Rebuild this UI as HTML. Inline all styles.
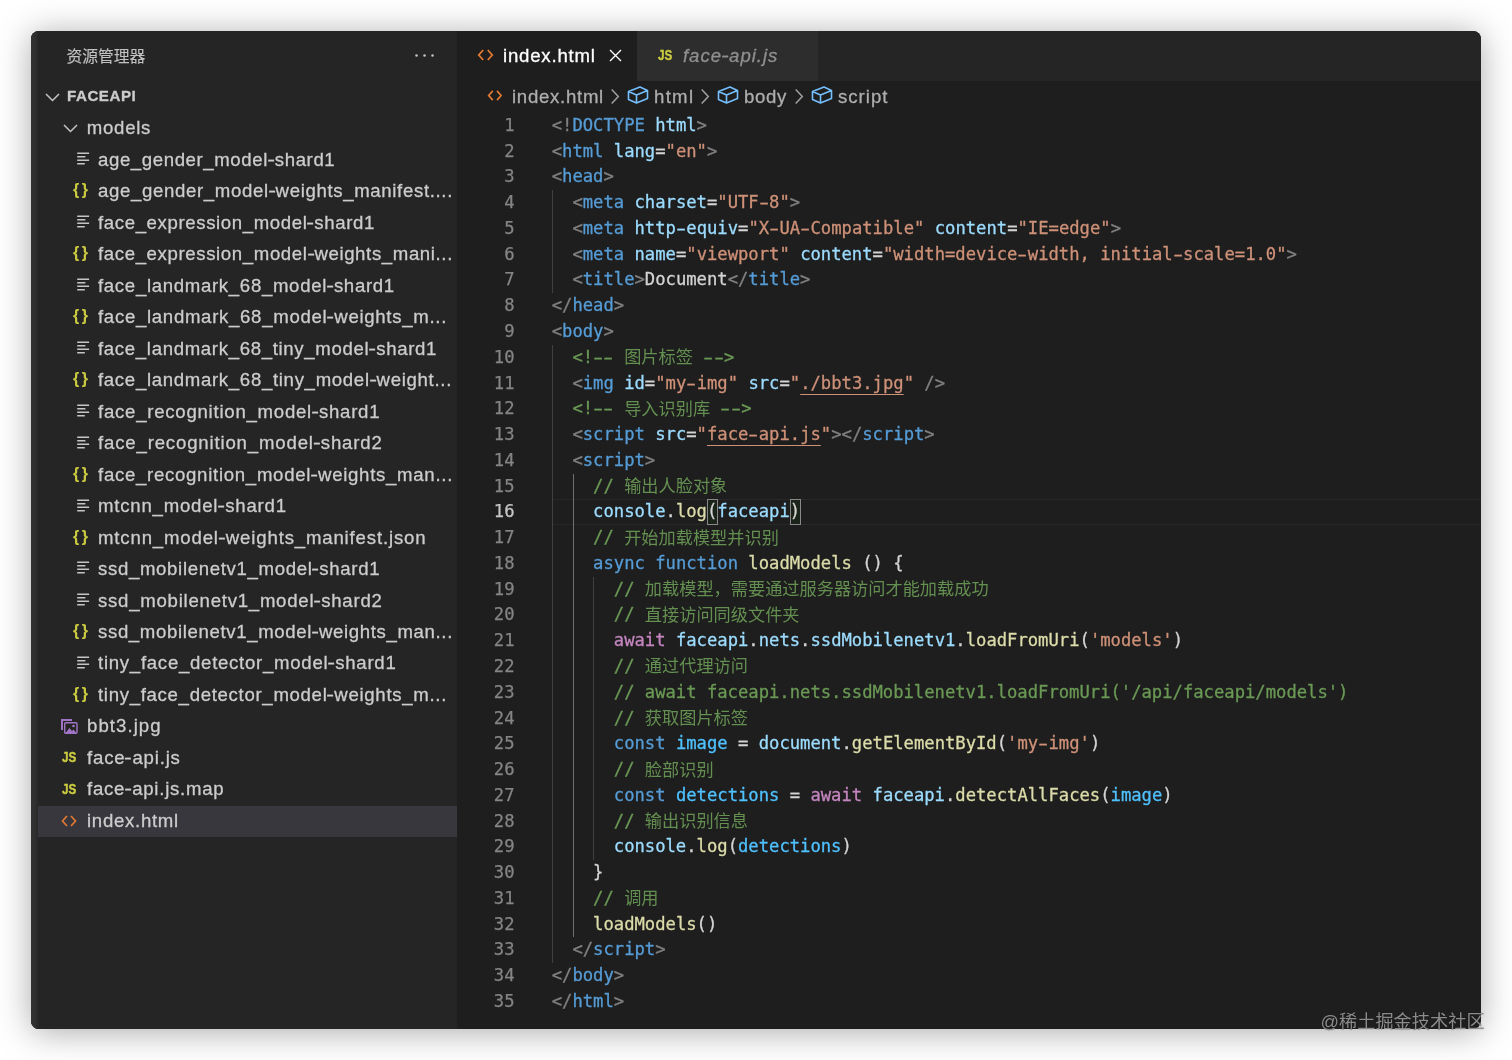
<!DOCTYPE html>
<html lang="zh">
<head>
<meta charset="UTF-8">
<title>VS Code</title>
<style>
html,body{margin:0;padding:0;background:#fff;}
body{width:1512px;height:1060px;position:relative;overflow:hidden;font-family:"Liberation Sans","Noto Sans CJK SC",sans-serif;}
#win{position:absolute;left:31px;top:31px;width:1450px;height:997.5px;border-radius:8px;background:#1e1e1e;box-shadow:0 3px 34px rgba(0,0,0,.34);overflow:hidden;}
#abs{position:absolute;left:0;top:0;width:1512px;height:1060px;will-change:transform;}
#side{position:absolute;left:31px;top:31px;width:426px;height:997.5px;background:#252526;border-radius:8px 0 0 8px;}
#edge{position:absolute;left:31px;top:31px;width:8px;height:997.5px;background:linear-gradient(90deg,#323232 0,#303030 50%,#252526 100%);border-radius:8px 0 0 8px;}
#tabs{position:absolute;left:457px;top:31px;width:1024px;height:50px;background:#252526;border-radius:0 8px 0 0;}
#tab1{position:absolute;left:457px;top:31px;width:180px;height:50px;background:#1e1e1e;}
#tab2{position:absolute;left:637px;top:31px;width:181px;height:50px;background:#2d2d2d;}
.abs{position:absolute;white-space:pre;-webkit-text-stroke:.3px;}
.row{position:absolute;left:38px;width:419px;height:31.5px;}
.row.sel{background:none;}
#selbg{position:absolute;left:38px;top:805.7px;width:419px;height:31.1px;background:#37373d;}
.row .nm{-webkit-text-stroke:.3px;position:absolute;top:0;line-height:31.5px;font-size:18.6px;color:#cccccc;white-space:pre;margin-left:-38px;}
.row .ic{position:absolute;top:8px;margin-left:-38px;}
.jic{-webkit-text-stroke:.1px;position:absolute;top:0;line-height:30px;font-size:16px;font-weight:bold;color:#cbcb41;margin-left:-38px;letter-spacing:2.6px;font-family:"Liberation Sans",sans-serif;}
.jsic{position:absolute;top:.3px;line-height:31.5px;font-size:14.6px;font-weight:bold;color:#cbcb41;margin-left:-38px;font-family:"Liberation Sans",sans-serif;transform:scaleX(.8);-webkit-text-stroke:.4px;transform-origin:0 50%;}
.ln{-webkit-text-stroke:.25px;position:absolute;left:457px;width:57.5px;text-align:right;height:25.77px;line-height:25.77px;font-family:"DejaVu Sans Mono","Liberation Mono",monospace;font-size:17.2px;color:#858585;}
.ln.act{color:#c6c6c6;}
.cl{-webkit-text-stroke:.3px;position:absolute;left:551.7px;height:25.77px;line-height:25.77px;font-family:"DejaVu Sans Mono","Liberation Mono","Noto Sans CJK SC",monospace;font-size:17.2px;white-space:pre;color:#d4d4d4;}
.cl .zh{font-family:"Noto Sans CJK SC",sans-serif;font-size:17.2px;line-height:0;position:relative;top:.5px;-webkit-text-stroke:0;opacity:.92;}
.cl .u,.cl .u .hy{text-decoration:underline;text-underline-offset:5.2px;text-decoration-thickness:1.2px;}
.cl .hy{display:inline-block;transform:scaleX(1.62);}
.nm .hy,.tb .hy{display:inline-block;transform:scaleX(1.25);}
.bmx{position:absolute;box-sizing:border-box;border:1px solid #888;background:rgba(0,100,0,.1);}
.guide{position:absolute;width:1px;background:#404040;}
.guide.a{background:#707070;}
#curline{position:absolute;left:552px;top:498.85px;width:929px;height:24.27px;border-top:1.5px solid #282828;border-bottom:1.5px solid #282828;}
#bc{position:absolute;left:457px;top:81px;height:31.5px;line-height:31.5px;font-size:18.6px;color:#aeaeae;white-space:pre;}
#bc span,#bc svg{position:absolute;}
#wm{position:absolute;left:1320.4px;top:1009px;font-size:18.2px;line-height:26px;color:rgba(150,150,150,.92);text-shadow:0 0 1px rgba(0,0,0,.55);letter-spacing:.05px;font-family:"Liberation Sans","Noto Sans CJK SC",sans-serif;white-space:pre;}
</style>
</head>
<body>
<div id="win"></div>
<div id="abs">
<div id="side"></div>
<div id="edge"></div>
<div id="tabs"></div>
<div id="tab1"></div>
<div id="tab2"></div>

<div id="selbg"></div>
<!-- sidebar header -->
<span class="abs" style="left:66.5px;top:32.3px;line-height:50px;font-size:15.75px;color:#c2c2c2;-webkit-text-stroke:.1px;">资源管理器</span>
<svg class="abs" style="left:412px;top:50px" width="26" height="12" viewBox="0 0 26 12"><circle cx="4.5" cy="5.6" r="1.25" fill="#c5c5c5"/><circle cx="12.5" cy="5.6" r="1.25" fill="#c5c5c5"/><circle cx="20.5" cy="5.6" r="1.25" fill="#c5c5c5"/></svg>
<svg class="abs" style="left:44px;top:89px" width="17" height="16" viewBox="0 0 17 16"><path d="M2 5l6.5 6.5L15 5" stroke="#c5c5c5" stroke-width="1.5" fill="none"/></svg>
<span class="abs" style="left:67px;top:81.4px;line-height:30px;font-size:15.1px;font-weight:bold;color:#cccccc;letter-spacing:.55px;">FACEAPI</span>
<div class="row" style="top:111.73px"><svg class="ic" style="left:62px;top:8px" width="17" height="16" viewBox="0 0 17 16"><path d="M2 5l6.5 6.5L15 5" stroke="#c5c5c5" stroke-width="1.5" fill="none"/></svg><span class="nm" style="left:86.8px;letter-spacing:0.728px">models</span></div>
<div class="row" style="top:144.00px"><svg class="ic" style="left:76px;top:7.4px" width="14" height="16" viewBox="0 0 14 16"><path d="M1.2 2.3h11.9M1.2 5.8h8.2M1.2 9.25h11.9M1.2 12.7h7.6" stroke="#c5c5c5" stroke-width="1.6" fill="none"/></svg><span class="nm" style="left:98px;letter-spacing:0.607px">age_gender_model<span class="hy">-</span>shard1</span></div>
<div class="row" style="top:175.47px"><span class="jic" style="left:73px">{}</span><span class="nm" style="left:98px;letter-spacing:0.654px">age_gender_model<span class="hy">-</span>weights_manifest....</span></div>
<div class="row" style="top:206.93px"><svg class="ic" style="left:76px;top:7.4px" width="14" height="16" viewBox="0 0 14 16"><path d="M1.2 2.3h11.9M1.2 5.8h8.2M1.2 9.25h11.9M1.2 12.7h7.6" stroke="#c5c5c5" stroke-width="1.6" fill="none"/></svg><span class="nm" style="left:98px;letter-spacing:0.622px">face_expression_model<span class="hy">-</span>shard1</span></div>
<div class="row" style="top:238.39px"><span class="jic" style="left:73px">{}</span><span class="nm" style="left:98px;letter-spacing:0.626px">face_expression_model<span class="hy">-</span>weights_mani...</span></div>
<div class="row" style="top:269.86px"><svg class="ic" style="left:76px;top:7.4px" width="14" height="16" viewBox="0 0 14 16"><path d="M1.2 2.3h11.9M1.2 5.8h8.2M1.2 9.25h11.9M1.2 12.7h7.6" stroke="#c5c5c5" stroke-width="1.6" fill="none"/></svg><span class="nm" style="left:98px;letter-spacing:0.683px">face_landmark_68_model<span class="hy">-</span>shard1</span></div>
<div class="row" style="top:301.32px"><span class="jic" style="left:73px">{}</span><span class="nm" style="left:98px;letter-spacing:0.699px">face_landmark_68_model<span class="hy">-</span>weights_m...</span></div>
<div class="row" style="top:332.79px"><svg class="ic" style="left:76px;top:7.4px" width="14" height="16" viewBox="0 0 14 16"><path d="M1.2 2.3h11.9M1.2 5.8h8.2M1.2 9.25h11.9M1.2 12.7h7.6" stroke="#c5c5c5" stroke-width="1.6" fill="none"/></svg><span class="nm" style="left:98px;letter-spacing:0.670px">face_landmark_68_tiny_model<span class="hy">-</span>shard1</span></div>
<div class="row" style="top:364.25px"><span class="jic" style="left:73px">{}</span><span class="nm" style="left:98px;letter-spacing:0.684px">face_landmark_68_tiny_model<span class="hy">-</span>weight...</span></div>
<div class="row" style="top:395.72px"><svg class="ic" style="left:76px;top:7.4px" width="14" height="16" viewBox="0 0 14 16"><path d="M1.2 2.3h11.9M1.2 5.8h8.2M1.2 9.25h11.9M1.2 12.7h7.6" stroke="#c5c5c5" stroke-width="1.6" fill="none"/></svg><span class="nm" style="left:98px;letter-spacing:0.752px">face_recognition_model<span class="hy">-</span>shard1</span></div>
<div class="row" style="top:427.18px"><svg class="ic" style="left:76px;top:7.4px" width="14" height="16" viewBox="0 0 14 16"><path d="M1.2 2.3h11.9M1.2 5.8h8.2M1.2 9.25h11.9M1.2 12.7h7.6" stroke="#c5c5c5" stroke-width="1.6" fill="none"/></svg><span class="nm" style="left:98px;letter-spacing:0.834px">face_recognition_model<span class="hy">-</span>shard2</span></div>
<div class="row" style="top:458.65px"><span class="jic" style="left:73px">{}</span><span class="nm" style="left:98px;letter-spacing:0.712px">face_recognition_model<span class="hy">-</span>weights_man...</span></div>
<div class="row" style="top:490.12px"><svg class="ic" style="left:76px;top:7.4px" width="14" height="16" viewBox="0 0 14 16"><path d="M1.2 2.3h11.9M1.2 5.8h8.2M1.2 9.25h11.9M1.2 12.7h7.6" stroke="#c5c5c5" stroke-width="1.6" fill="none"/></svg><span class="nm" style="left:98px;letter-spacing:0.782px">mtcnn_model<span class="hy">-</span>shard1</span></div>
<div class="row" style="top:521.58px"><span class="jic" style="left:73px">{}</span><span class="nm" style="left:98px;letter-spacing:0.837px">mtcnn_model<span class="hy">-</span>weights_manifest.json</span></div>
<div class="row" style="top:553.04px"><svg class="ic" style="left:76px;top:7.4px" width="14" height="16" viewBox="0 0 14 16"><path d="M1.2 2.3h11.9M1.2 5.8h8.2M1.2 9.25h11.9M1.2 12.7h7.6" stroke="#c5c5c5" stroke-width="1.6" fill="none"/></svg><span class="nm" style="left:98px;letter-spacing:0.665px">ssd_mobilenetv1_model<span class="hy">-</span>shard1</span></div>
<div class="row" style="top:584.51px"><svg class="ic" style="left:76px;top:7.4px" width="14" height="16" viewBox="0 0 14 16"><path d="M1.2 2.3h11.9M1.2 5.8h8.2M1.2 9.25h11.9M1.2 12.7h7.6" stroke="#c5c5c5" stroke-width="1.6" fill="none"/></svg><span class="nm" style="left:98px;letter-spacing:0.750px">ssd_mobilenetv1_model<span class="hy">-</span>shard2</span></div>
<div class="row" style="top:615.98px"><span class="jic" style="left:73px">{}</span><span class="nm" style="left:98px;letter-spacing:0.644px">ssd_mobilenetv1_model<span class="hy">-</span>weights_man...</span></div>
<div class="row" style="top:647.44px"><svg class="ic" style="left:76px;top:7.4px" width="14" height="16" viewBox="0 0 14 16"><path d="M1.2 2.3h11.9M1.2 5.8h8.2M1.2 9.25h11.9M1.2 12.7h7.6" stroke="#c5c5c5" stroke-width="1.6" fill="none"/></svg><span class="nm" style="left:98px;letter-spacing:0.725px">tiny_face_detector_model<span class="hy">-</span>shard1</span></div>
<div class="row" style="top:678.90px"><span class="jic" style="left:73px">{}</span><span class="nm" style="left:98px;letter-spacing:0.689px">tiny_face_detector_model<span class="hy">-</span>weights_m...</span></div>
<div class="row" style="top:710.37px"><svg class="ic" style="left:59.6px;top:8px" width="18" height="17" viewBox="0 0 18 17"><path d="M1 1h11v2H3v9H1z" fill="#a074c4"/><rect x="4.7" y="4.7" width="12.3" height="10.6" rx="1" fill="none" stroke="#a074c4" stroke-width="1.4"/><path d="M5.5 15l4-5 2.5 3 1.5-1.5 3 3.5z" fill="#a074c4"/><circle cx="13.5" cy="8" r="1.3" fill="#a074c4"/></svg><span class="nm" style="left:87px;letter-spacing:1.059px">bbt3.jpg</span></div>
<div class="row" style="top:741.83px"><span class="jsic" style="left:61.9px">JS</span><span class="nm" style="left:87px;letter-spacing:0.813px">face<span class="hy">-</span>api.js</span></div>
<div class="row" style="top:773.30px"><span class="jsic" style="left:61.9px">JS</span><span class="nm" style="left:87px;letter-spacing:0.756px">face<span class="hy">-</span>api.js.map</span></div>
<div class="row sel" style="top:804.76px"><svg class="ic" style="left:61px;top:9.1px" width="16" height="14" viewBox="0 0 16 14"><path d="M6 2L1.5 7 6 12M10 2l4.5 5L10 12" stroke="#e37933" stroke-width="1.7" fill="none"/></svg><span class="nm" style="left:87px;letter-spacing:0.715px">index.html</span></div>

<!-- tabs -->
<svg class="abs" style="left:477px;top:48px" width="17" height="14" viewBox="0 0 17 14"><path d="M6.2 2L1.8 7l4.4 5M10.8 2l4.4 5-4.4 5" stroke="#e37933" stroke-width="1.8" fill="none"/></svg>
<span class="abs" style="left:503px;top:31px;line-height:49px;font-size:18.6px;color:#ffffff;letter-spacing:.8px;">index.html</span>
<svg class="abs" style="left:608px;top:48px" width="15" height="15" viewBox="0 0 15 15"><path d="M2 2l11 11M13 2L2 13" stroke="#ffffff" stroke-width="1.4" fill="none"/></svg>
<span class="abs" style="left:658px;top:31px;line-height:49px;font-size:14.6px;font-weight:bold;color:#cbcb41;transform:scaleX(.8);transform-origin:0 50%;-webkit-text-stroke:.4px;">JS</span>
<span class="abs" style="left:683px;top:31px;line-height:49px;font-size:18.6px;font-style:italic;color:#8f8f8f;letter-spacing:.95px;"><span class="tb">face<span class="hy">-</span>api.js</span></span>

<!-- breadcrumb -->
<svg class="abs" style="left:486.6px;top:89.3px" width="15.8" height="13" viewBox="0 0 17 14"><path d="M6.2 2L1.8 7l4.4 5M10.8 2l4.4 5-4.4 5" stroke="#e37933" stroke-width="1.8" fill="none"/></svg>
<span class="abs" style="line-height:31.5px;font-size:18.6px;color:#aeaeae;letter-spacing:.72px;left:512px;top:81px;">index.html</span>
<span class="abs" style="left:610px;top:88px;"><svg width="10" height="17" viewBox="0 0 10 17"><path d="M1.7 1.5l6.6 7-6.6 7" fill="none" stroke="#a0a0a0" stroke-width="1.5"/></svg></span>
<span class="abs" style="left:627px;top:85.3px;"><svg width="22" height="20" viewBox="0 0 22 20"><path d="M1.5 6.5L13 2l7.5 3.5v8L9.5 18l-8-3.5zM1.5 6.5l8 3.5L20.5 5.5M9.5 10v8" fill="none" stroke="#75beff" stroke-width="1.6" stroke-linejoin="round"/></svg></span>
<span class="abs" style="line-height:31.5px;font-size:18.6px;color:#aeaeae;letter-spacing:1.3px;left:654px;top:81px;">html</span>
<span class="abs" style="left:700px;top:88px;"><svg width="10" height="17" viewBox="0 0 10 17"><path d="M1.7 1.5l6.6 7-6.6 7" fill="none" stroke="#a0a0a0" stroke-width="1.5"/></svg></span>
<span class="abs" style="left:717px;top:85.3px;"><svg width="22" height="20" viewBox="0 0 22 20"><path d="M1.5 6.5L13 2l7.5 3.5v8L9.5 18l-8-3.5zM1.5 6.5l8 3.5L20.5 5.5M9.5 10v8" fill="none" stroke="#75beff" stroke-width="1.6" stroke-linejoin="round"/></svg></span>
<span class="abs" style="line-height:31.5px;font-size:18.6px;color:#aeaeae;letter-spacing:.7px;left:744px;top:81px;">body</span>
<span class="abs" style="left:794px;top:88px;"><svg width="10" height="17" viewBox="0 0 10 17"><path d="M1.7 1.5l6.6 7-6.6 7" fill="none" stroke="#a0a0a0" stroke-width="1.5"/></svg></span>
<span class="abs" style="left:811px;top:85.3px;"><svg width="22" height="20" viewBox="0 0 22 20"><path d="M1.5 6.5L13 2l7.5 3.5v8L9.5 18l-8-3.5zM1.5 6.5l8 3.5L20.5 5.5M9.5 10v8" fill="none" stroke="#75beff" stroke-width="1.6" stroke-linejoin="round"/></svg></span>
<span class="abs" style="line-height:31.5px;font-size:18.6px;color:#aeaeae;letter-spacing:1px;left:838px;top:81px;">script</span>

<!-- editor -->
<div id="curline"></div>
<div class="bmx" style="left:706.73px;top:499.35px;width:10.96px;height:25.77px"></div>
<div class="bmx" style="left:789.57px;top:499.35px;width:10.96px;height:25.77px"></div>
<div class="guide" style="left:552px;top:190.11px;height:103.08px"></div>
<div class="guide" style="left:552px;top:344.73px;height:618.48px"></div>
<div class="guide a" style="left:572.5px;top:473.58px;height:463.86px"></div>
<div class="guide" style="left:593.3px;top:576.66px;height:283.47px"></div>
<div class="ln" style="top:112.80px">1</div><div class="cl" style="top:112.80px"><span style="color:#808080">&lt;!</span><span style="color:#569cd6">DOCTYPE</span> <span style="color:#9cdcfe">html</span><span style="color:#808080">&gt;</span></div>
<div class="ln" style="top:138.57px">2</div><div class="cl" style="top:138.57px"><span style="color:#808080">&lt;</span><span style="color:#569cd6">html</span> <span style="color:#9cdcfe">lang</span><span style="color:#d4d4d4">=</span><span style="color:#ce9178">"en"</span><span style="color:#808080">&gt;</span></div>
<div class="ln" style="top:164.34px">3</div><div class="cl" style="top:164.34px"><span style="color:#808080">&lt;</span><span style="color:#569cd6">head</span><span style="color:#808080">&gt;</span></div>
<div class="ln" style="top:190.11px">4</div><div class="cl" style="top:190.11px">  <span style="color:#808080">&lt;</span><span style="color:#569cd6">meta</span> <span style="color:#9cdcfe">charset</span><span style="color:#d4d4d4">=</span><span style="color:#ce9178">"UTF<span class="hy">-</span>8"</span><span style="color:#808080">&gt;</span></div>
<div class="ln" style="top:215.88px">5</div><div class="cl" style="top:215.88px">  <span style="color:#808080">&lt;</span><span style="color:#569cd6">meta</span> <span style="color:#9cdcfe">http<span class="hy">-</span>equiv</span><span style="color:#d4d4d4">=</span><span style="color:#ce9178">"X<span class="hy">-</span>UA<span class="hy">-</span>Compatible"</span> <span style="color:#9cdcfe">content</span><span style="color:#d4d4d4">=</span><span style="color:#ce9178">"IE=edge"</span><span style="color:#808080">&gt;</span></div>
<div class="ln" style="top:241.65px">6</div><div class="cl" style="top:241.65px">  <span style="color:#808080">&lt;</span><span style="color:#569cd6">meta</span> <span style="color:#9cdcfe">name</span><span style="color:#d4d4d4">=</span><span style="color:#ce9178">"viewport"</span> <span style="color:#9cdcfe">content</span><span style="color:#d4d4d4">=</span><span style="color:#ce9178">"width=device<span class="hy">-</span>width, initial<span class="hy">-</span>scale=1.0"</span><span style="color:#808080">&gt;</span></div>
<div class="ln" style="top:267.42px">7</div><div class="cl" style="top:267.42px">  <span style="color:#808080">&lt;</span><span style="color:#569cd6">title</span><span style="color:#808080">&gt;</span><span style="color:#d4d4d4">Document</span><span style="color:#808080">&lt;/</span><span style="color:#569cd6">title</span><span style="color:#808080">&gt;</span></div>
<div class="ln" style="top:293.19px">8</div><div class="cl" style="top:293.19px"><span style="color:#808080">&lt;/</span><span style="color:#569cd6">head</span><span style="color:#808080">&gt;</span></div>
<div class="ln" style="top:318.96px">9</div><div class="cl" style="top:318.96px"><span style="color:#808080">&lt;</span><span style="color:#569cd6">body</span><span style="color:#808080">&gt;</span></div>
<div class="ln" style="top:344.73px">10</div><div class="cl" style="top:344.73px">  <span style="color:#6a9955">&lt;!<span class="hy">-</span><span class="hy">-</span> <span class="zh">图片标签</span> <span class="hy">-</span><span class="hy">-</span>&gt;</span></div>
<div class="ln" style="top:370.50px">11</div><div class="cl" style="top:370.50px">  <span style="color:#808080">&lt;</span><span style="color:#569cd6">img</span> <span style="color:#9cdcfe">id</span><span style="color:#d4d4d4">=</span><span style="color:#ce9178">"my<span class="hy">-</span>img"</span> <span style="color:#9cdcfe">src</span><span style="color:#d4d4d4">=</span><span style="color:#ce9178">"</span><span class="u" style="color:#ce9178">./bbt3.jpg</span><span style="color:#ce9178">"</span> <span style="color:#808080">/&gt;</span></div>
<div class="ln" style="top:396.27px">12</div><div class="cl" style="top:396.27px">  <span style="color:#6a9955">&lt;!<span class="hy">-</span><span class="hy">-</span> <span class="zh">导入识别库</span> <span class="hy">-</span><span class="hy">-</span>&gt;</span></div>
<div class="ln" style="top:422.04px">13</div><div class="cl" style="top:422.04px">  <span style="color:#808080">&lt;</span><span style="color:#569cd6">script</span> <span style="color:#9cdcfe">src</span><span style="color:#d4d4d4">=</span><span style="color:#ce9178">"</span><span class="u" style="color:#ce9178">face<span class="hy">-</span>api.js</span><span style="color:#ce9178">"</span><span style="color:#808080">&gt;&lt;/</span><span style="color:#569cd6">script</span><span style="color:#808080">&gt;</span></div>
<div class="ln" style="top:447.81px">14</div><div class="cl" style="top:447.81px">  <span style="color:#808080">&lt;</span><span style="color:#569cd6">script</span><span style="color:#808080">&gt;</span></div>
<div class="ln" style="top:473.58px">15</div><div class="cl" style="top:473.58px">    <span style="color:#6a9955">// <span class="zh">输出人脸对象</span></span></div>
<div class="ln act" style="top:499.35px">16</div><div class="cl" style="top:499.35px">    <span style="color:#9cdcfe">console</span><span style="color:#d4d4d4">.</span><span style="color:#dcdcaa">log</span><span style="color:#d4d4d4">(</span><span style="color:#9cdcfe">faceapi</span><span style="color:#d4d4d4">)</span></div>
<div class="ln" style="top:525.12px">17</div><div class="cl" style="top:525.12px">    <span style="color:#6a9955">// <span class="zh">开始加载模型并识别</span></span></div>
<div class="ln" style="top:550.89px">18</div><div class="cl" style="top:550.89px">    <span style="color:#569cd6">async</span> <span style="color:#569cd6">function</span> <span style="color:#dcdcaa">loadModels</span><span style="color:#d4d4d4"> () {</span></div>
<div class="ln" style="top:576.66px">19</div><div class="cl" style="top:576.66px">      <span style="color:#6a9955">// <span class="zh">加载模型，需要通过服务器访问才能加载成功</span></span></div>
<div class="ln" style="top:602.43px">20</div><div class="cl" style="top:602.43px">      <span style="color:#6a9955">// <span class="zh">直接访问同级文件夹</span></span></div>
<div class="ln" style="top:628.20px">21</div><div class="cl" style="top:628.20px">      <span style="color:#c586c0">await</span> <span style="color:#9cdcfe">faceapi</span><span style="color:#d4d4d4">.</span><span style="color:#9cdcfe">nets</span><span style="color:#d4d4d4">.</span><span style="color:#9cdcfe">ssdMobilenetv1</span><span style="color:#d4d4d4">.</span><span style="color:#dcdcaa">loadFromUri</span><span style="color:#d4d4d4">(</span><span style="color:#ce9178">'models'</span><span style="color:#d4d4d4">)</span></div>
<div class="ln" style="top:653.97px">22</div><div class="cl" style="top:653.97px">      <span style="color:#6a9955">// <span class="zh">通过代理访问</span></span></div>
<div class="ln" style="top:679.74px">23</div><div class="cl" style="top:679.74px">      <span style="color:#6a9955">// await faceapi.nets.ssdMobilenetv1.loadFromUri('/api/faceapi/models')</span></div>
<div class="ln" style="top:705.51px">24</div><div class="cl" style="top:705.51px">      <span style="color:#6a9955">// <span class="zh">获取图片标签</span></span></div>
<div class="ln" style="top:731.28px">25</div><div class="cl" style="top:731.28px">      <span style="color:#569cd6">const</span> <span style="color:#4fc1ff">image</span><span style="color:#d4d4d4"> = </span><span style="color:#9cdcfe">document</span><span style="color:#d4d4d4">.</span><span style="color:#dcdcaa">getElementById</span><span style="color:#d4d4d4">(</span><span style="color:#ce9178">'my<span class="hy">-</span>img'</span><span style="color:#d4d4d4">)</span></div>
<div class="ln" style="top:757.05px">26</div><div class="cl" style="top:757.05px">      <span style="color:#6a9955">// <span class="zh">脸部识别</span></span></div>
<div class="ln" style="top:782.82px">27</div><div class="cl" style="top:782.82px">      <span style="color:#569cd6">const</span> <span style="color:#4fc1ff">detections</span><span style="color:#d4d4d4"> = </span><span style="color:#c586c0">await</span> <span style="color:#9cdcfe">faceapi</span><span style="color:#d4d4d4">.</span><span style="color:#dcdcaa">detectAllFaces</span><span style="color:#d4d4d4">(</span><span style="color:#4fc1ff">image</span><span style="color:#d4d4d4">)</span></div>
<div class="ln" style="top:808.59px">28</div><div class="cl" style="top:808.59px">      <span style="color:#6a9955">// <span class="zh">输出识别信息</span></span></div>
<div class="ln" style="top:834.36px">29</div><div class="cl" style="top:834.36px">      <span style="color:#9cdcfe">console</span><span style="color:#d4d4d4">.</span><span style="color:#dcdcaa">log</span><span style="color:#d4d4d4">(</span><span style="color:#4fc1ff">detections</span><span style="color:#d4d4d4">)</span></div>
<div class="ln" style="top:860.13px">30</div><div class="cl" style="top:860.13px">    <span style="color:#d4d4d4">}</span></div>
<div class="ln" style="top:885.90px">31</div><div class="cl" style="top:885.90px">    <span style="color:#6a9955">// <span class="zh">调用</span></span></div>
<div class="ln" style="top:911.67px">32</div><div class="cl" style="top:911.67px">    <span style="color:#dcdcaa">loadModels</span><span style="color:#d4d4d4">()</span></div>
<div class="ln" style="top:937.44px">33</div><div class="cl" style="top:937.44px">  <span style="color:#808080">&lt;/</span><span style="color:#569cd6">script</span><span style="color:#808080">&gt;</span></div>
<div class="ln" style="top:963.21px">34</div><div class="cl" style="top:963.21px"><span style="color:#808080">&lt;/</span><span style="color:#569cd6">body</span><span style="color:#808080">&gt;</span></div>
<div class="ln" style="top:988.98px">35</div><div class="cl" style="top:988.98px"><span style="color:#808080">&lt;/</span><span style="color:#569cd6">html</span><span style="color:#808080">&gt;</span></div>

<div id="wm">@稀土掘金技术社区</div>
</div>
</body>
</html>
